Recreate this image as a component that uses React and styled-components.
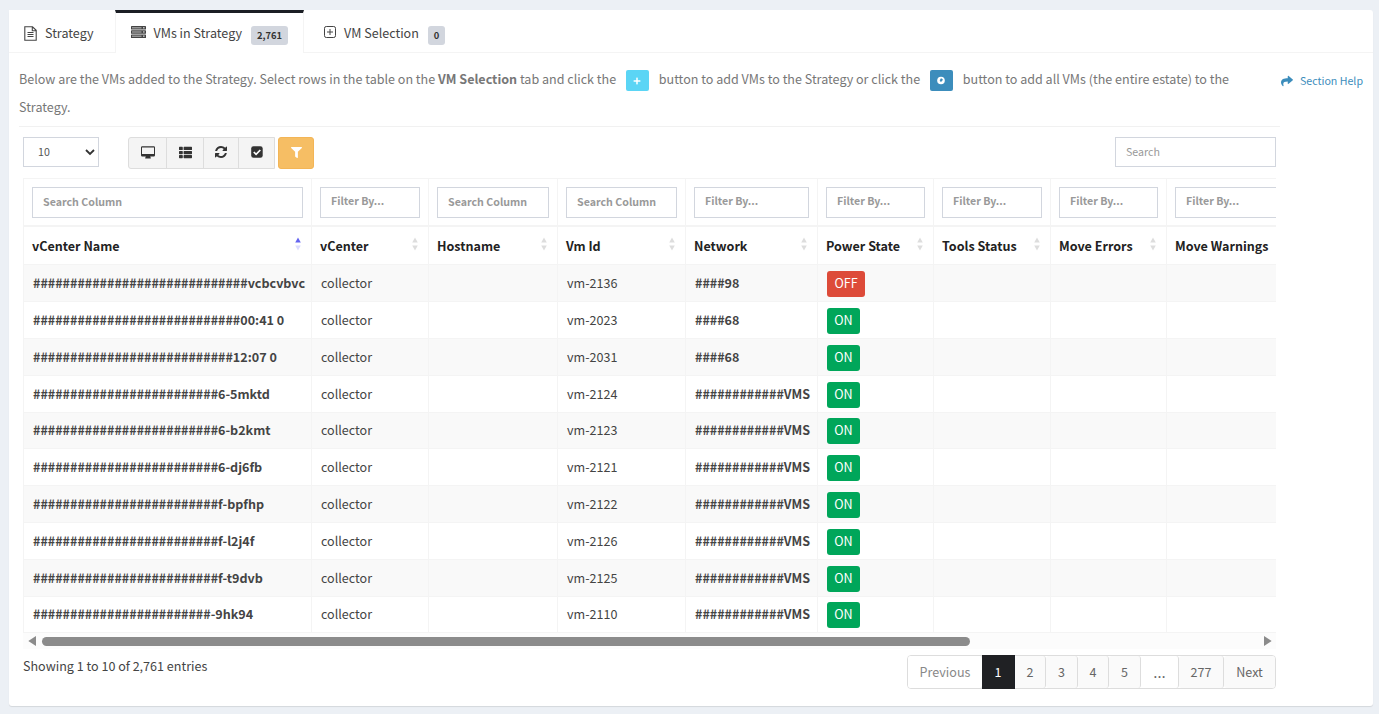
import React from "react"
import styled, { createGlobalStyle } from "styled-components"
import { FaThList, FaFilter, FaShare, FaPlus } from "react-icons/fa"

const Global = createGlobalStyle`
  * {
    box-sizing: border-box;
  }
  body {
    margin: 0;
    background: #ecf0f5;
    color: #333;
    font-family: "Noto Sans CJK SC", "Open Sans", sans-serif;
    font-size: 12.55px;
    line-height: 20px;
  }
  input, select {
    font-family: inherit;
  }
`

const Page = styled.div`
  width: 1379px;
  height: 714px;
  padding: 10px 6px 8px 9px;
  overflow: hidden;
`

const Box = styled.div`
  height: 696px;
  background: #fff;
  border-radius: 3px;
  box-shadow: 0 1px 1px rgba(0, 0, 0, 0.1);
`

const Tabs = styled.div`
  display: flex;
  height: 43px;
  border-bottom: 1px solid #f4f4f4;
`

const Tab = styled.div`
  display: flex;
  align-items: flex-start;
  width: ${p => p.width}px;
  height: ${p => (p.active ? 43 : 42)}px;
  padding: ${p => (p.active ? 10 : 13)}px 0 0 ${p => p.indent || 15}px;
  color: #444;
  background: #fff;
  border-top: ${p => (p.active ? "3px solid #1b1e24" : "0")};
  border-left: ${p => (p.active ? "1px solid #f4f4f4" : "0")};
  border-right: ${p => (p.active ? "1px solid #f4f4f4" : "0")};
  white-space: nowrap;
  svg {
    flex: none;
    margin-top: 3px;
    margin-right: 8px;
  }
`

const Badge = styled.span`
  height: 19px;
  margin: 3px 0 0 9px;
  padding: 0 6px;
  border-radius: 3px;
  background: #d2d6de;
  color: #333;
  font-size: 9.4px;
  font-weight: 700;
  line-height: 18px;
`

const Content = styled.div`
  display: flex;
  justify-content: space-between;
  padding: 12px 10px 0 10px;
`

const Main = styled.div`
  width: 1261px;
`

const Intro = styled.p`
  height: 62px;
  margin: 0;
  border-bottom: 1px solid #f1f1f1;
  color: #777;
  line-height: 28px;
  white-space: nowrap;
`

const Chip = styled.span`
  display: inline-flex;
  align-items: center;
  justify-content: center;
  width: 23px;
  height: 21px;
  margin: -4px 7px;
  border-radius: 2px;
  background: ${p => p.color};
  color: #fff;
  vertical-align: middle;
`

const Help = styled.a`
  display: flex;
  align-items: center;
  gap: 7px;
  height: 20px;
  margin-top: 6px;
  color: #3c8dbc;
  font-size: 10.65px;
  white-space: nowrap;
`

const Toolbar = styled.div`
  display: flex;
  align-items: flex-start;
  height: 51px;
  padding: 10px 4px 0;
`

const Length = styled.div`
  display: flex;
  align-items: center;
  justify-content: space-between;
  width: 76px;
  height: 30px;
  padding: 0 3px 1px 14px;
  border: 1px solid #d2d6de;
  color: #555;
  font-size: 10.65px;
  svg {
    margin-top: 2px;
  }
`

const Buttons = styled.div`
  display: flex;
  margin-left: 29px;
  border: 1px solid #ddd;
  border-radius: 3px 0 0 3px;
  background: #f4f4f4;
`

const IconButton = styled.button`
  display: flex;
  align-items: center;
  justify-content: center;
  width: ${p => p.width}px;
  height: 30px;
  padding: 0 0 2px;
  border: 0;
  border-right: 1px solid #ddd;
  background: none;
  color: #333;
  &:last-child {
    border-right: 0;
  }
`

const FilterButton = styled.button`
  display: flex;
  align-items: center;
  justify-content: center;
  width: 36px;
  height: 32px;
  margin: 0 auto 0 3px;
  padding: 0 0 1px;
  border: 1px solid #f3b556;
  border-radius: 3px;
  background: #f6be64;
  color: #fff;
`

const Input = styled.input`
  display: block;
  width: ${p => p.width || "100%"};
  height: ${p => p.height || 31}px;
  margin: 0;
  padding: 0 9px ${p => p.lift || 2}px 10px;
  border: 1px solid #d2d6de;
  border-radius: 0;
  font-size: 10.65px;
  font-weight: ${p => p.weight || 400};
  &::placeholder {
    color: #999;
    opacity: 1;
  }
`

const TableWrap = styled.div`
  width: 1253px;
  height: 455px;
  margin-left: 4px;
  overflow: hidden;
`

const Table = styled.table`
  width: 1274px;
  table-layout: fixed;
  border-collapse: separate;
  border-spacing: 0;
  border-top: 1px solid #f4f4f4;
  border-left: 1px solid #f4f4f4;
`

const FilterCell = styled.th`
  height: 48px;
  padding: 8px 8px 7px;
  border-right: 1px solid #f4f4f4;
  border-bottom: 2px solid #f4f4f4;
`

const HeadInner = styled.div`
  display: flex;
  justify-content: space-between;
  align-items: center;
  height: 20px;
  svg {
    margin-top: -3px;
  }
`

const HeadCell = styled.th`
  height: 38.4px;
  padding: 0 10px 0 8px;
  border-right: 1px solid #f4f4f4;
  border-bottom: 1px solid #f4f4f4;
  color: #222;
  font-weight: 700;
  text-align: left;
  white-space: nowrap;
`

const Row = styled.tr`
  background: ${p => (p.odd ? "#f9f9f9" : "#fff")};
`

const Cell = styled.td`
  height: 36.8px;
  padding: 0 0 0 9px;
  border-right: 1px solid #f4f4f4;
  border-bottom: 1px solid #f4f4f4;
  color: #444;
  font-weight: ${p => (p.bold ? 700 : 400)};
  white-space: nowrap;
`

const Power = styled.span`
  display: block;
  width: ${p => (p.on ? 33 : 38)}px;
  height: 26px;
  margin-top: 2px;
  border-radius: 3px;
  background: ${p => (p.on ? "#00a65a" : "#dd4b39")};
  color: #fff;
  font-weight: 400;
  line-height: 24px;
  text-align: center;
`

const Scrollbar = styled.div`
  display: flex;
  align-items: center;
  justify-content: space-between;
  width: 1253px;
  height: 16px;
  margin-left: 4px;
  padding: 0 4px 0 5px;
  background: #fcfcfc;
`

const Track = styled.div`
  flex: 1;
  margin: 0 6px;
`

const Thumb = styled.div`
  width: 928px;
  height: 9px;
  border-radius: 5px;
  background: #8b8b8b;
`

const Footer = styled.div`
  display: flex;
  justify-content: space-between;
  align-items: flex-start;
  padding: 6px 4px 0;
  color: #444;
`

const Info = styled.div`
  padding-top: 1px;
`

const Pagination = styled.div`
  display: flex;
  height: 34px;
  border: 1px solid #ddd;
  border-radius: 4px;
`

const PageLink = styled.div`
  width: ${p => p.width}px;
  height: ${p => (p.active ? 34 : 32)}px;
  margin: ${p => (p.active ? "-1px 0 0 -1px" : "0")};
  border-right: 1px solid ${p => (p.active ? "#1b1e24" : "#ddd")};
  border-radius: ${p => (p.active ? 0 : "3px")};
  background: ${p => (p.active ? "#202124" : p.plain ? "#fff" : "#fafafa")};
  color: ${p => (p.active ? "#fff" : p.muted ? "#888" : "#666")};
  line-height: ${p => (p.active ? 34 : 32)}px;
  text-align: center;
  &:last-child {
    border-right: 0;
  }
`

const Ellipsis = styled.span`
  font-family: "Open Sans", sans-serif;
  font-size: 16px;
`

const columns = [
  { name: "vCenter Name", width: 288, filter: "Search Column", sort: "asc" },
  { name: "vCenter", width: 117, filter: "Filter By..." },
  { name: "Hostname", width: 129, filter: "Search Column" },
  { name: "Vm Id", width: 128, filter: "Search Column" },
  { name: "Network", width: 132, filter: "Filter By..." },
  { name: "Power State", width: 116, filter: "Filter By..." },
  { name: "Tools Status", width: 117, filter: "Filter By..." },
  { name: "Move Errors", width: 116, filter: "Filter By..." },
  { name: "Move Warnings", width: 130, filter: "Filter By..." },
]

const h = n => "#".repeat(n)

const vms = [
  { name: h(29) + "vcbcvbvc", id: "vm-2136", network: "####98", on: false },
  { name: h(28) + "00:41 0", id: "vm-2023", network: "####68", on: true },
  { name: h(27) + "12:07 0", id: "vm-2031", network: "####68", on: true },
  { name: h(25) + "6-5mktd", id: "vm-2124", network: h(12) + "VMS", on: true },
  { name: h(25) + "6-b2kmt", id: "vm-2123", network: h(12) + "VMS", on: true },
  { name: h(25) + "6-dj6fb", id: "vm-2121", network: h(12) + "VMS", on: true },
  { name: h(25) + "f-bpfhp", id: "vm-2122", network: h(12) + "VMS", on: true },
  { name: h(25) + "f-l2j4f", id: "vm-2126", network: h(12) + "VMS", on: true },
  { name: h(25) + "f-t9dvb", id: "vm-2125", network: h(12) + "VMS", on: true },
  { name: h(24) + "-9hk94", id: "vm-2110", network: h(12) + "VMS", on: true },
]

const pages = [
  { label: "Previous", width: 75, plain: true, muted: true },
  { label: "1", width: 33, active: true },
  { label: "2", width: 31 },
  { label: "3", width: 32 },
  { label: "4", width: 31 },
  { label: "5", width: 32 },
  { label: "…", width: 38, plain: true },
  { label: "277", width: 45 },
  { label: "Next", width: 51 },
]

const FileIcon = () => (
  <svg width="13" height="15" viewBox="0 0 13 15" fill="none" stroke="#444" strokeWidth="1.1">
    <path d="M0.8 0.8h7.700l3.700 3.500v9.900h-11.400z M8.300 0.800v3.900h3.900" />
    <path d="M3.500 6.500h6M3.500 8.500h6M3.500 10.500h6" strokeWidth="1" />
  </svg>
)

const ServerIcon = () => (
  <svg width="15" height="12" viewBox="0 0 15 12">
    {[0, 4.2, 8.4].map(y => (
      <g key={y}>
        <rect x="0" y={y} width="15" height="3.600" rx="0.600" fill="#444" />
        <path d={`M1 ${y + 1.8}h9.500`} stroke="#aaa" strokeWidth="1.200" />
        <rect x="12.200" y={y + 1.1} width="1.300" height="1.300" fill="#eee" />
      </g>
    ))}
  </svg>
)

const PlusSquareIcon = () => (
  <svg width="12" height="12" viewBox="0 0 12 12" fill="none" stroke="#444">
    <rect x="0.500" y="0.500" width="11" height="11" rx="1.800" />
    <path d="M6 3v6M3 6h6" />
  </svg>
)

const DesktopIcon = () => (
  <svg width="14" height="13" viewBox="0 0 14 13" fill="currentColor">
    <path
      fillRule="evenodd"
      d="M1.200 0.300h11.600a1.200 1.200 0 0 1 1.200 1.200v7.800a1.200 1.200 0 0 1-1.200 1.200h-3.600l0.600 1.500v0.600h-5.600v-0.600l0.600-1.500h-3.600a1.200 1.200 0 0 1-1.200-1.200v-7.800a1.200 1.200 0 0 1 1.200-1.200zM1 1.400v6.500h12v-6.500z"
    />
  </svg>
)

const CheckIcon = () => (
  <svg width="12" height="12" viewBox="0 0 12 12">
    <rect width="11.500" height="11.500" x="0.200" y="0.200" rx="2.300" fill="currentColor" />
    <path d="M2.800 6l2.300 2.300 4.200-4.300" fill="none" stroke="#fff" strokeWidth="1.700" />
  </svg>
)

// refresh arrows, two open arcs with a corner arrow each
const RefreshIcon = () => (
  <svg width="12" height="12" viewBox="0 0 1536 1536" fill="currentColor">
    <path d="M1511 928q0 5-1 7-64 268-268 434.500T764 1536q-146 0-282.500-55T238 1324l-129 129q-19 19-45 19t-45-19-19-45V960q0-26 19-45t45-19h448q26 0 45 19t19 45-19 45l-137 137q71 66 161 102t187 36q134 0 250-65t186-179q11-17 53-117 8-23 30-23h192q13 0 22.500 9.500t9.500 22.500zm25-800v448q0 26-19 45t-45 19h-448q-26 0-45-19t-19-45 19-45l138-138Q969 256 768 256q-134 0-250 65T332 500q-11 17-53 117-8 23-30 23H50q-13 0-22.500-9.500T18 608v-7q65-268 270-434.500T768 0q146 0 284 55.500T1297 212l130-129q19-19 45-19t45 19 19 45z" />
  </svg>
)

const GlobeIcon = () => (
  <svg width="8" height="9" viewBox="0 0 8 9">
    <circle cx="4" cy="4.500" r="3.800" fill="#fff" />
    <path d="M4 2.200l1.800 1-0.600 1.900-1.500 0.800-1-1.700z" fill="#3c8dbc" />
  </svg>
)

const SortIcon = ({ asc }) => (
  <svg width="6" height="14" viewBox="0 0 6 14">
    <path d="M3 0.500l2.800 5h-5.600z" fill={asc ? "#6464f0" : "#ddd"} />
    <path d="M3 13.500l2.800-5h-5.600z" fill={asc ? "#dcdcff" : "#ddd"} />
  </svg>
)

const App = () => (
  <Page>
    <Global />
    <Box>
      <Tabs>
        <Tab width={106}>
          <FileIcon />
          Strategy
        </Tab>
        <Tab width={189} indent={14.5} active>
          <ServerIcon />
          VMs in Strategy
          <Badge>2,761</Badge>
        </Tab>
        <Tab width={160} indent={20}>
          <PlusSquareIcon />
          VM Selection
          <Badge>0</Badge>
        </Tab>
      </Tabs>
      <Content>
        <Main>
          <Intro>
            Below are the VMs added to the Strategy. Select rows in the table on the <b>VM Selection</b> tab and click the{" "}
            <Chip color="#5bd5f5"><FaPlus size={8} /></Chip>{" "}
            button to add VMs to the Strategy or click the{" "}
            <Chip color="#3c8dbc"><GlobeIcon /></Chip>{" "}
            button to add all VMs (the entire estate) to the
            <br />
            Strategy.
          </Intro>
          <Toolbar>
            <Length>
              10
              <svg width="10" height="7" viewBox="0 0 10 7" fill="none" stroke="#333" strokeWidth="1.800">
                <path d="M1 1l4 4 4-4" />
              </svg>
            </Length>
            <Buttons>
              <IconButton width={38}><DesktopIcon /></IconButton>
              <IconButton width={37}><FaThList size={13} /></IconButton>
              <IconButton width={35}><RefreshIcon /></IconButton>
              <IconButton width={35}><CheckIcon /></IconButton>
            </Buttons>
            <FilterButton><FaFilter size={11} /></FilterButton>
            <Input placeholder="Search" width="161px" height={30} />
          </Toolbar>
          <TableWrap>
            <Table>
              <colgroup>
                {columns.map(col => <col key={col.name} style={{ width: col.width }} />)}
              </colgroup>
              <thead>
                <tr>
                  {columns.map(col => (
                    <FilterCell key={col.name}>
                      <Input placeholder={col.filter} weight={700} lift={col.filter === "Filter By..." ? 4 : 2} />
                    </FilterCell>
                  ))}
                </tr>
                <tr>
                  {columns.map(col => (
                    <HeadCell key={col.name}>
                      <HeadInner>
                        {col.name}
                        <SortIcon asc={col.sort === "asc"} />
                      </HeadInner>
                    </HeadCell>
                  ))}
                </tr>
              </thead>
              <tbody>
                {vms.map((vm, i) => (
                  <Row key={vm.id} odd={i % 2 === 0}>
                    <Cell bold>{vm.name}</Cell>
                    <Cell>collector</Cell>
                    <Cell />
                    <Cell>{vm.id}</Cell>
                    <Cell bold>{vm.network}</Cell>
                    <Cell><Power on={vm.on}>{vm.on ? "ON" : "OFF"}</Power></Cell>
                    <Cell />
                    <Cell />
                    <Cell />
                  </Row>
                ))}
              </tbody>
            </Table>
          </TableWrap>
          <Scrollbar>
            <svg width="8" height="10" viewBox="0 0 8 10"><path d="M8 0v10L0.300 5z" fill="#8b8b8b" /></svg>
            <Track><Thumb /></Track>
            <svg width="8" height="10" viewBox="0 0 8 10"><path d="M0 0v10L7.700 5z" fill="#8b8b8b" /></svg>
          </Scrollbar>
          <Footer>
            <Info>Showing 1 to 10 of 2,761 entries</Info>
            <Pagination>
              {pages.map(({ label, ...rest }) => (
                <PageLink key={label} {...rest}>
                  {label === "…" ? <Ellipsis>{label}</Ellipsis> : label}
                </PageLink>
              ))}
            </Pagination>
          </Footer>
        </Main>
        <Help><FaShare size={12} />Section Help</Help>
      </Content>
    </Box>
  </Page>
)

export default App
